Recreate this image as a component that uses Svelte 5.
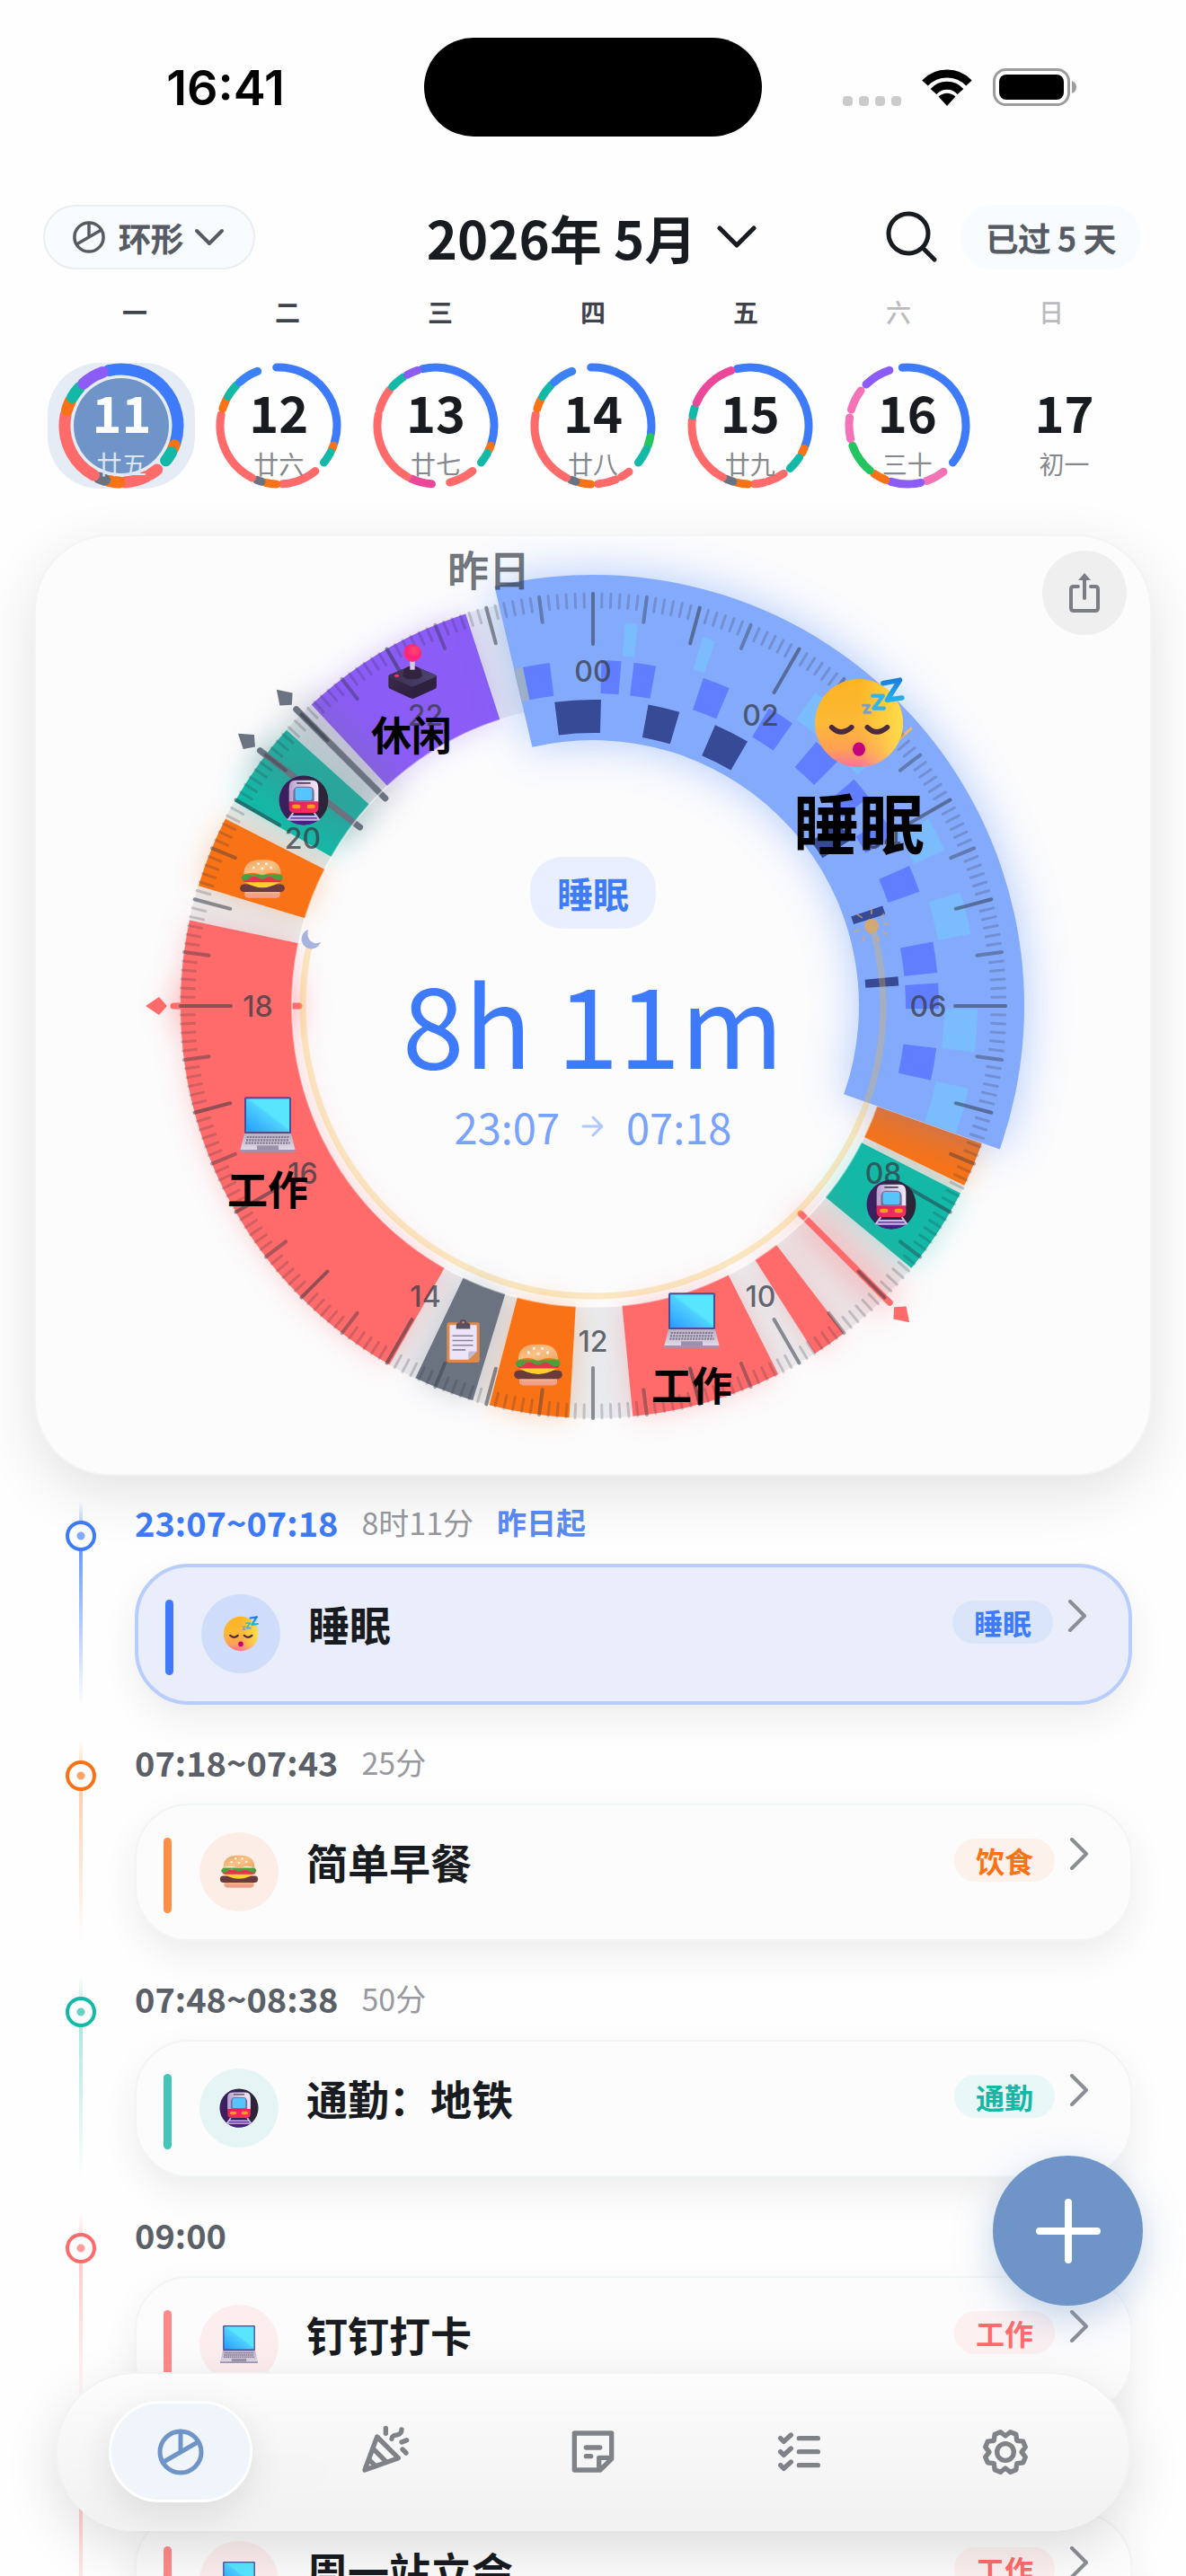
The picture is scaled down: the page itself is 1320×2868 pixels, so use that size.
<script lang="ts">
  type Arc = [number, number, string];

  const BLUE = '#3e7bfa';
  const SKY = '#3b82f6';
  const ORANGE = '#f97316';
  const TEAL = '#14b8a6';
  const RED = '#ff6b6b';
  const GRAY = '#6b7280';
  const PURPLE = '#8b5cf6';
  const PINK = '#ec4899';
  const ROSE = '#f472b6';
  const GREEN = '#22c55e';

  const weekdays = ['一', '二', '三', '四', '五', '六', '日'];

  // 每天的小圆环：起始角度、结束角度、颜色
  const days: { num: number; lunar: string; arcs: Arc[] }[] = [
    {
      num: 11,
      lunar: '廿五',
      arcs: [
        [-13, 108, BLUE], [110, 115, ORANGE], [118, 128, TEAL], [141, 149, RED], [154, 176, RED],
        [182, 193, ORANGE], [197, 203, GRAY], [209, 281, RED], [286, 296, ORANGE], [300, 312, TEAL], [318, 341, PURPLE]
      ]
    },
    {
      num: 12,
      lunar: '廿六',
      arcs: [
        [-2, 107, BLUE], [110, 114, ORANGE], [117, 129, TEAL], [141, 161, RED], [164, 176, RED],
        [182, 193, ORANGE], [197, 202, GRAY], [207, 281, RED], [287, 297, ORANGE], [300, 314, TEAL], [318, 339, SKY]
      ]
    },
    {
      num: 13,
      lunar: '廿七',
      arcs: [
        [-13, 108, BLUE], [110, 115, ORANGE], [118, 129, TEAL], [141, 166, RED], [184, 205, PINK],
        [209, 281, RED], [286, 308, RED], [312, 326, TEAL], [331, 342, PURPLE]
      ]
    },
    {
      num: 14,
      lunar: '廿八',
      arcs: [
        [-2, 98, BLUE], [101, 110, GREEN], [114, 129, TEAL], [142, 151, RED], [157, 175, RED],
        [182, 193, ORANGE], [197, 202, GRAY], [207, 281, RED], [287, 297, ORANGE], [300, 314, TEAL], [318, 339, SKY]
      ]
    },
    {
      num: 15,
      lunar: '廿九',
      arcs: [
        [-13, 110, BLUE], [113, 118, ORANGE], [123, 137, TEAL], [145, 162, RED], [166, 176, RED],
        [182, 193, ORANGE], [197, 204, GRAY], [208, 276, RED], [280, 288, TEAL], [293, 341, PINK]
      ]
    },
    {
      num: 16,
      lunar: '三十',
      arcs: [
        [-5, 129, BLUE], [142, 161, ROSE], [167, 197, PURPLE], [202, 215, ORANGE], [220, 250, GREEN],
        [257, 278, ROSE], [286, 307, ROSE], [315, 342, PURPLE]
      ]
    },
    { num: 17, lunar: '初一', arcs: [] }
  ];

  // 表盘上的时间段，单位小时
  const segments: Arc[] = [
    [7.3, 7.72, ORANGE],
    [7.8, 8.63, TEAL],
    [9.5, 9.83, RED],
    [10.22, 11.63, RED],
    [12.22, 12.97, ORANGE],
    [13.13, 13.7, GRAY],
    [13.97, 18.8, RED],
    [19.13, 19.8, ORANGE],
    [19.98, 20.8, TEAL],
    [21.13, 22.8, PURPLE]
  ];

  const markers = [
    { hour: 9, color: RED },
    { hour: 18, color: RED },
    { hour: 20.5, color: GRAY },
    { hour: 21, color: GRAY }
  ];

  const DEEP = '#374a95';
  const CORE = '#607eff';
  const REM = '#7bbcff';

  // 睡眠阶段，角度
  const stages: Arc[] = [
    [-7.2, 1.5, DEEP], [10.4, 16.4, DEEP], [23.5, 30.3, DEEP], [53, 57.2, DEEP], [70.9, 72.6, DEEP], [84.5, 86.2, DEEP],
    [-13.2, -11.7, '#9bafc8'],
    [-11.7, -7.2, CORE], [1.4, 4.7, CORE], [6.8, 10.5, CORE], [18.6, 23.2, CORE], [30.6, 35.2, CORE], [40.2, 45, CORE],
    [49, 52.9, CORE], [57.2, 60.7, CORE], [66.1, 70.7, CORE], [79.3, 84.5, CORE], [86.2, 90.5, CORE], [97, 102.4, CORE],
    [4.8, 6.7, REM], [16.6, 18.5, REM], [35.3, 40.2, REM], [45, 48.8, REM], [60.8, 66.1, REM], [72.8, 79.2, REM],
    [90.5, 96.9, REM], [102.4, 109.3, REM]
  ];

  function stageRadius(color: string): [number, number] {
    if (color === DEEP) return [304, 341];
    if (color === REM) return [391, 428];
    return [348, 385];
  }

  const dialIcons = [
    { icon: 'sleep', x: 296, y: -315, size: 112 },
    { icon: 'joystick', x: -201, y: -373, size: 64 },
    { icon: 'train', x: -322, y: -229, size: 56 },
    { icon: 'train', x: 332, y: 221, size: 56 },
    { icon: 'burger', x: -368, y: -141, size: 52 },
    { icon: 'burger', x: -61, y: 400, size: 56 },
    { icon: 'laptop', x: -362, y: 132, size: 64 },
    { icon: 'laptop', x: 110, y: 350, size: 64 },
    { icon: 'clipboard', x: -145, y: 373, size: 50 }
  ];

  const dialTexts = [
    { text: '休闲', x: -202, y: -304 },
    { text: '工作', x: -362, y: 202 },
    { text: '工作', x: 110, y: 420 }
  ];

  const entries = [
    { time: '23:07~07:18', duration: '8时11分', note: '昨日起', title: '睡眠', tag: '睡眠', icon: 'sleep', color: BLUE, active: true },
    { time: '07:18~07:43', duration: '25分', title: '简单早餐', tag: '饮食', icon: 'burger', color: ORANGE },
    { time: '07:48~08:38', duration: '50分', title: '通勤：地铁', tag: '通勤', icon: 'train', color: TEAL },
    { time: '09:00', title: '钉钉打卡', tag: '工作', icon: 'laptop', color: RED },
    { time: '09:30~09:50', duration: '20分', title: '周一站立会', tag: '工作', icon: 'laptop', color: RED }
  ];

  function polar(r: number, deg: number): string {
    const a = (deg * Math.PI) / 180;
    return `${(r * Math.sin(a)).toFixed(2)} ${(-r * Math.cos(a)).toFixed(2)}`;
  }

  function arcPath(r: number, a0: number, a1: number): string {
    const large = a1 - a0 > 180 ? 1 : 0;
    return `M${polar(r, a0)}A${r} ${r} 0 ${large} 1 ${polar(r, a1)}`;
  }

  function sector(r0: number, r1: number, a0: number, a1: number): string {
    const large = a1 - a0 > 180 ? 1 : 0;
    return `M${polar(r1, a0)}A${r1} ${r1} 0 ${large} 1 ${polar(r1, a1)}L${polar(r0, a1)}A${r0} ${r0} 0 ${large} 0 ${polar(r0, a0)}Z`;
  }

  // 每 5 分钟一个刻度
  const ticks = Array.from({ length: 288 }, (_, i) => {
    if (i % 24 === 0) return { deg: i * 1.25, len: 56, kind: 'hour' };
    if (i % 12 === 0) return { deg: i * 1.25, len: 41, kind: 'hour' };
    if (i % 6 === 0) return { deg: i * 1.25, len: 28, kind: 'half' };
    return { deg: i * 1.25, len: 15, kind: 'minor' };
  });

  const hourLabels = Array.from({ length: 12 }, (_, i) => {
    const a = (i * 30 * Math.PI) / 180;
    return { text: String(i * 2).padStart(2, '0'), x: 373 * Math.sin(a), y: -373 * Math.cos(a) };
  });

  const gear =
    'M' +
    Array.from({ length: 8 }, (_, k) => [polar(54, 45 * k), polar(69, 45 * k + 14), polar(69, 45 * k + 31)].join('L')).join('L') +
    'Z';
</script>

{#snippet emoji(name)}
  <svg class="emoji" viewBox="0 0 48 48" aria-hidden="true"><use href="#e-{name}" /></svg>
{/snippet}

{#snippet pie()}
  <svg class="pie" viewBox="0 0 60 60" aria-hidden="true">
    <circle cx="30" cy="30" r="23" />
    <path d="M30 7v23M49 19L11 41" />
  </svg>
{/snippet}

<svg class="defs" aria-hidden="true">
  <defs>
    <linearGradient id="g-face" x1="0" y1="0" x2="0" y2="1">
      <stop offset="0" stop-color="#fbb421" />
      <stop offset="0.5" stop-color="#fdb937" />
      <stop offset="0.8" stop-color="#ff9f55" />
      <stop offset="1" stop-color="#f9739a" />
    </linearGradient>
    <linearGradient id="g-shine" x1="0" y1="0" x2="1" y2="0">
      <stop offset="0.5" stop-color="#ffe04a" stop-opacity="0" />
      <stop offset="1" stop-color="#ffe04a" stop-opacity="0.9" />
    </linearGradient>
    <linearGradient id="g-z" x1="0" y1="0" x2="0" y2="1">
      <stop offset="0" stop-color="#1d7fdc" />
      <stop offset="1" stop-color="#22b2ec" />
    </linearGradient>
    <linearGradient id="g-screen" x1="0" y1="1" x2="1" y2="0">
      <stop offset="0" stop-color="#249cff" />
      <stop offset="0.5" stop-color="#4fd0ff" />
      <stop offset="0.55" stop-color="#58e6ff" />
      <stop offset="1" stop-color="#58e6ff" />
    </linearGradient>
    <linearGradient id="g-base" x1="0" y1="0" x2="0" y2="1">
      <stop offset="0" stop-color="#b9afc6" />
      <stop offset="1" stop-color="#e0dae6" />
    </linearGradient>
    <linearGradient id="g-bun" x1="0" y1="0" x2="1" y2="1">
      <stop offset="0" stop-color="#e3a564" />
      <stop offset="0.5" stop-color="#fbc083" />
      <stop offset="1" stop-color="#e9a568" />
    </linearGradient>
    <linearGradient id="g-night" x1="0" y1="0" x2="1" y2="0">
      <stop offset="0" stop-color="#3d1f63" />
      <stop offset="1" stop-color="#2b2533" />
    </linearGradient>
    <linearGradient id="g-train" x1="0" y1="0" x2="1" y2="0">
      <stop offset="0" stop-color="#b79fcf" />
      <stop offset="0.5" stop-color="#d9cfe6" />
      <stop offset="1" stop-color="#efe8f7" />
    </linearGradient>
    <linearGradient id="g-trainred" x1="0" y1="0" x2="1" y2="1">
      <stop offset="0" stop-color="#d8215f" />
      <stop offset="1" stop-color="#ff2f62" />
    </linearGradient>
    <radialGradient id="g-ball" cx="0.6" cy="0.35" r="0.7">
      <stop offset="0" stop-color="#ff4a6c" />
      <stop offset="0.6" stop-color="#fb2478" />
      <stop offset="1" stop-color="#ff2f8e" />
    </radialGradient>
    <linearGradient id="g-left" x1="0" y1="0" x2="1" y2="1">
      <stop offset="0" stop-color="#3c2f47" />
      <stop offset="1" stop-color="#2a1840" />
    </linearGradient>
    <linearGradient id="g-top" x1="0" y1="0" x2="1" y2="0">
      <stop offset="0" stop-color="#3d2f4f" />
      <stop offset="1" stop-color="#4b4373" />
    </linearGradient>

    <symbol id="e-sleep" viewBox="0 0 48 48">
      <circle cx="24" cy="24" r="21" fill="url(#g-face)" />
      <circle cx="24" cy="24" r="21" fill="url(#g-shine)" />
      <path d="M11 26q4.500 4.500 9.500 0M28 26q4.500 4.500 9.500 0" fill="none" stroke="#4a2b3b" stroke-width="2.400" stroke-linecap="round" />
      <ellipse cx="24" cy="36.500" rx="3" ry="3.300" fill="#c4007f" />
      <path d="M26 15.500h3l-2.500 3.500h3" fill="none" stroke="#7c9cc9" stroke-width="1.300" stroke-linejoin="round" stroke-linecap="round" />
      <path d="M30.500 11h5l-4.500 6h5" fill="none" stroke="#36b3ec" stroke-width="1.800" stroke-linejoin="round" stroke-linecap="round" />
      <path d="M35.500 5l8-1.500-6 9.500 7-1" fill="none" stroke="url(#g-z)" stroke-width="2.400" stroke-linejoin="round" stroke-linecap="round" />
    </symbol>

    <symbol id="e-burger" viewBox="0 0 48 48">
      <path d="M6 34h36v5q0 4-4 4H10q-4 0-4-4z" fill="#f2b184" />
      <path d="M6 39h36q0 4-4 4H10q-4 0-4-4z" fill="#eea08c" />
      <rect x="1" y="29" width="46" height="8" rx="4" fill="#6a3b3d" />
      <path d="M4 26h40l-8 4q-12 5-24 0z" fill="#fbd02c" />
      <rect x="4" y="21" width="40" height="6" rx="3" fill="#e5334f" />
      <path d="M5 19h38q5 5-1 6-5 0-8-3-4-2-7 1-4 2-8-1-4-3-7 0-3 4-8 3-4-2 1-6z" fill="#4f9d3c" />
      <path d="M5 19Q5 5 20 4h8q15 1 15 15-8-3-14-1-5 3-10 0-6-2-14 1z" fill="url(#g-bun)" />
      <g fill="#fff3df">
        <circle cx="20" cy="8" r="1.400" /><circle cx="28" cy="8" r="1.400" /><circle cx="15" cy="12" r="1.400" />
        <circle cx="24" cy="13" r="1.400" /><circle cx="33" cy="12" r="1.400" />
      </g>
    </symbol>

    <symbol id="e-train" viewBox="0 0 48 48">
      <circle cx="24" cy="24" r="23.500" fill="url(#g-night)" />
      <path d="M13 38h22l4 4q-6 5.500-15 5.500T9 42z" fill="#4c1f86" />
      <path d="M14 36l-5 7M34 36l5 7M12 39.500h24M10.500 42.500h27" stroke="#cbb8e6" stroke-width="1.800" />
      <path d="M10 12q0-7 6-7h16q6 0 6 7v14H10z" fill="url(#g-train)" />
      <path d="M10 25h28v6q0 5-6 5H16q-6 0-6-5z" fill="url(#g-trainred)" />
      <path d="M14 17q0-6 5-6h10q5 0 5 6v8H14z" fill="#7a6f94" />
      <rect x="16" y="12" width="16" height="12" rx="2" fill="#56c4ff" />
      <path d="M18 7.500h12" stroke="#4a4458" stroke-width="1.500" stroke-linecap="round" />
      <rect x="13" y="28" width="8" height="4" rx="2" fill="#ff9a1f" />
      <rect x="27" y="28" width="8" height="4" rx="2" fill="#ff9a1f" />
    </symbol>

    <symbol id="e-laptop" viewBox="0 0 48 48">
      <rect x="4.500" y="1" width="39" height="31" rx="1.500" fill="#4f4d92" />
      <rect x="6" y="2.500" width="36" height="27.500" fill="url(#g-screen)" />
      <path d="M4.500 31.500h39l3.500 14H1z" fill="url(#g-base)" />
      <path d="M1 45h46v1q0 1-1 1H2q-1 0-1-1z" fill="#9e93b2" />
      <path d="M6.500 34.500h35M6 37h36M5.500 39.500h37" stroke="#80778f" stroke-width="1.600" stroke-dasharray="1.600 0.800" />
      <rect x="15" y="41.500" width="18" height="3.500" fill="#9a92a8" />
    </symbol>

    <symbol id="e-clipboard" viewBox="0 0 48 48">
      <rect x="7" y="4" width="35" height="43" rx="2.500" fill="#dd8a4e" />
      <path d="M10 7h29v28l-9 9H10z" fill="#ece4f8" />
      <path d="M39 35h-7q-2 0-2 2v7z" fill="#c2b5da" />
      <path d="M13 18.500h22M13 23.500h22M13 28.500h22M13 33.500h14" stroke="#8a8399" stroke-width="1.500" />
      <path d="M17 8q0-4 4-4 0-3 3.500-3T28 4q4 0 4 4v3H17z" fill="#5a5060" />
      <circle cx="24.500" cy="4" r="1.200" fill="#dd8a4e" />
    </symbol>

    <symbol id="e-joystick" viewBox="0 0 48 48">
      <path d="M4 28l20-9 20 9v9q0 1.500-1.500 2L26 46.500q-2 1-4 0L5.500 39Q4 38.500 4 37z" fill="url(#g-left)" />
      <path d="M24 37l20-9v9q0 1.500-1.500 2L26 46.500q-1 .5-2 .5z" fill="#2e2140" />
      <path d="M5 27l17-7q2-1 4 0l17 7q1.500 1 0 2l-17 7.500q-2 1-4 0L5 29q-1.500-1 0-2z" fill="url(#g-top)" />
      <path d="M16 28q0-8 8-8t8 8q-1 3-8 3t-8-3z" fill="#33233f" />
      <rect x="22" y="14" width="4" height="9" fill="#d9c8e8" />
      <circle cx="24" cy="9" r="7.500" fill="url(#g-ball)" />
      <ellipse cx="11" cy="28" rx="2" ry="1.200" fill="#ff2f6e" />
    </symbol>

    <filter id="blur-sm" x="-60%" y="-60%" width="220%" height="220%"><feGaussianBlur stdDeviation="16" /></filter>
    <filter id="blur-lg" x="-30%" y="-30%" width="160%" height="160%"><feGaussianBlur stdDeviation="26" /></filter>
    <filter id="blur-line" filterUnits="userSpaceOnUse" x="-620" y="-520" width="1240" height="1040">
      <feGaussianBlur stdDeviation="18" />
    </filter>
  </defs>
</svg>

<main class="app">
  <div class="status-bar">
    <span class="clock">16:41</span>
    <span class="island"></span>
    <span class="indicators">
      <span class="signal"><i></i><i></i><i></i><i></i></span>
      <svg class="wifi" viewBox="0 0 58 42" aria-hidden="true">
        <path d="M4.500 16.500a34 34 0 0 1 49 0" />
        <path d="M14 26a20 20 0 0 1 30 0" />
        <path class="solid" d="M29 42l-9.500-10.500q9.500-7.500 19 0z" />
      </svg>
      <svg class="battery" viewBox="0 0 94 42" aria-hidden="true">
        <rect x="1.500" y="1.500" width="83" height="39" rx="13" fill="none" stroke="#9c9c9c" stroke-width="3" />
        <rect x="7" y="7" width="72" height="28" rx="8" />
        <path d="M88 14q5 2 5 7t-5 7z" fill="#9c9c9c" />
      </svg>
    </span>
  </div>

  <header class="topbar">
    <button class="pill mode">
      {@render pie()}
      环形
      <svg class="chevron" viewBox="0 0 34 20" aria-hidden="true"><path d="M3 3l14 14L31 3" /></svg>
    </button>
    <button class="month">
      2026年 5月
      <svg class="chevron big" viewBox="0 0 46 28" aria-hidden="true"><path d="M4 4l19 19L42 4" /></svg>
    </button>
    <div class="topbar-right">
      <button class="search" aria-label="搜索">
        <svg viewBox="0 0 60 60" aria-hidden="true"><circle cx="26" cy="26" r="22" /><path d="M42 42l13 13" /></svg>
      </button>
      <button class="pill passed">已过 5 天</button>
    </div>
  </header>

  <div class="weekdays">
    {#each weekdays as day, i}
      <span class:weekend={i > 4}>{day}</span>
    {/each}
  </div>

  <div class="days">
    {#each days as day, i}
      <button class="day" class:selected={i === 0}>
        <svg class="ring" viewBox="-70 -70 140 140" aria-hidden="true">
          {#if i === 0}<circle r="53" fill="#6f95c8" />{/if}
          {#each day.arcs as [a0, a1, color]}
            <path d={arcPath(i === 0 ? 63 : 65, a0, a1)} stroke={color} />
          {/each}
        </svg>
        <span class="num">{day.num}</span>
        <span class="lunar">{day.lunar}</span>
      </button>
    {/each}
  </div>

  <section class="dial-card">
    <svg class="dial" viewBox="-620 -523 1240 1044" role="img" aria-label="时间环">
      <path d={sector(335, 459, 0, 359.9)} fill="#7b8494" fill-opacity="0.14" />

      {#each segments as [h0, h1, color]}
        <path d={sector(335, 459, h0 * 15, h1 * 15)} fill={color} opacity="0.3" filter="url(#blur-sm)" />
      {/each}
      {#each segments as [h0, h1, color]}
        <path d={sector(335, 459, h0 * 15, h1 * 15)} fill={color} />
      {/each}

      {#each markers as m}
        <g transform="rotate({m.hour * 15})">
          <path d="M0-468V-326" stroke={m.color} stroke-width="40" opacity="0.36" filter="url(#blur-line)" />
          <path d="M0-467V-327" stroke={m.color} stroke-width="7" stroke-linecap="round" />
          <path d="M0-498L10-483 0-474-10-483z" fill={m.color} />
        </g>
      {/each}

      <circle r="335" fill="none" stroke="#ffffff" stroke-opacity="0.5" stroke-width="2" />

      <path d={sector(296, 480, -13.2, 109.4)} fill={BLUE} opacity="0.4" filter="url(#blur-lg)" />
      <path d={sector(296, 480, -13.2, 109.4)} fill="#84aafc" />
      {#each stages as [a0, a1, color]}
        <path d={sector(...stageRadius(color), a0, a1)} fill={color} />
      {/each}
      <path d="M0-471V-434" transform="rotate(48.900)" stroke="#eeb85c" stroke-width="3" />

      <path d={arcPath(323, 75, 283)} fill="none" stroke="#f5be3c" stroke-opacity="0.3" stroke-width="7" />
      <g transform="translate(310 -89)" stroke="#dba964" stroke-width="2" opacity="0.9">
        <circle r="7" fill="#dba964" />
        <path d="M0-13v-7M10-9l4-5M13-2l7-1M12 6l6 4M-10-9l-6-4M-13 4l-7 2M-7 11l-4 7M6 11l3 6" stroke-opacity="0.7" />
      </g>
      <path d="M-317-85a11 11 0 1 0 14 14q-8 3-12-2t-2-12z" fill="#a9b3e0" />

      {#each ticks as t}
        <path class="tick {t.kind}" d="M0-459V{-459 + t.len}" transform="rotate({t.deg})" />
      {/each}
      {#each hourLabels as l}
        <text class="hour-label" x={l.x} y={l.y}>{l.text}</text>
      {/each}

      <text class="yesterday" x="-116" y="-488">昨日</text>
      {#each dialIcons as d}
        <use href="#e-{d.icon}" x={d.x - d.size / 2} y={d.y - d.size / 2} width={d.size} height={d.size} />
      {/each}
      <text class="dial-text large" x="296" y="-207">睡眠</text>
      {#each dialTexts as t}
        <text class="dial-text" x={t.x} y={t.y}>{t.text}</text>
      {/each}
    </svg>

    <div class="dial-center">
      <span class="badge">睡眠</span>
      <strong class="total">8h 11m</strong>
      <span class="range">
        23:07
        <svg viewBox="0 0 26 26" aria-hidden="true"><path d="M2 13h21M13 3l10 10-10 10" /></svg>
        07:18
      </span>
    </div>

    <button class="share" aria-label="分享">
      <svg viewBox="0 0 36 48" aria-hidden="true">
        <path d="M11 17H6q-3 0-3 3v21q0 3 3 3h24q3 0 3-3V20q0-3-3-3h-5M18 30V7" />
        <path class="head" d="M18 2l7 8H11z" />
      </svg>
    </button>
  </section>

  <section class="timeline">
    {#each entries as entry}
      <article class="entry" class:active={entry.active} style="--c: {entry.color}">
        <div class="rail"><span class="dot"></span></div>
        <div class="entry-body">
          <div class="entry-head">
            <span class="time">{entry.time}</span>
            {#if entry.duration}<span class="duration">{entry.duration}</span>{/if}
            {#if entry.note}<span class="note">{entry.note}</span>{/if}
          </div>
          <a class="entry-card" href="#detail">
            <span class="bar"></span>
            <span class="avatar">{@render emoji(entry.icon)}</span>
            <span class="title">{entry.title}</span>
            <span class="tag">{entry.tag}</span>
            <svg class="arrow" viewBox="0 0 22 36" aria-hidden="true"><path d="M3 2l16 16L3 34" /></svg>
          </a>
        </div>
      </article>
    {/each}
  </section>

  <button class="fab" aria-label="添加">
    <svg viewBox="0 0 72 72" aria-hidden="true"><path d="M36 4v64M4 36h64" /></svg>
  </button>

  <nav class="tabbar">
    <a class="tab current" href="#ring" aria-label="环形">{@render pie()}</a>
    <a class="tab" href="#events" aria-label="活动">
      <svg viewBox="72 93 180 180" aria-hidden="true">
        <path d="M131 132L202 203 90 243z" />
        <path d="M117 171l44 44M104 208l22 22" />
        <path d="M160 103v18M180 139c3-15 11-11 20-14s13-6 13-17M213 150l17-7M216 174l12 12" />
      </svg>
    </a>
    <a class="tab" href="#notes" aria-label="笔记">
      <svg viewBox="750 93 180 180" aria-hidden="true">
        <path d="M778 120h124v86l-38 37h-86zM860 243v-41h42M817 168h46M817 197h16" />
      </svg>
    </a>
    <a class="tab" href="#todo" aria-label="待办">
      <svg viewBox="60 93 180 180" aria-hidden="true">
        <path d="M86 137l11 11 24-22M86 182l11 11 24-22M86 227l11 11 24-22M148 137h63M148 182h63M148 227h63" />
      </svg>
    </a>
    <a class="tab" href="#settings" aria-label="设置">
      <svg viewBox="-90 -90 180 180" aria-hidden="true"><path d={gear} /><circle r="28" /></svg>
    </a>
  </nav>
</main>

<style>
  :global(body) {
    background: #fefefe;
  }

  .defs {
    position: absolute;
    width: 0;
    height: 0;
  }

  .app {
    position: relative;
    display: flex;
    flex-direction: column;
    height: 100vh;
    overflow: hidden;
    background: #fefefe;
    color: #181b20;
    font-family: 'Noto Sans CJK SC', 'Noto Sans', sans-serif;
  }

  button {
    padding: 0;
    border: none;
    background: none;
    color: inherit;
    font: inherit;
    cursor: pointer;
  }

  a {
    color: inherit;
    text-decoration: none;
  }

  svg {
    display: block;
    flex: none;
  }

  .status-bar {
    display: grid;
    grid-template-columns: 1fr auto 1fr;
    align-items: center;
    height: 110px;
    margin-top: 42px;
  }

  .clock {
    justify-self: center;
    padding-left: 30px;
    font-family: Inter, 'Liberation Sans', sans-serif;
    font-size: 54px;
    font-weight: 600;
    color: #000;
  }

  .island {
    width: 376px;
    height: 110px;
    border-radius: 55px;
    background: #000;
  }

  .indicators {
    display: flex;
    align-items: center;
    justify-content: flex-end;
    gap: 22px;
    padding-right: 121px;
  }

  .signal {
    display: flex;
    align-self: flex-end;
    gap: 7px;
  }

  .signal i {
    width: 11px;
    height: 11px;
    border-radius: 4px;
    background: #cbcbcb;
  }

  .wifi {
    width: 58px;
    height: 42px;
  }

  .wifi path {
    fill: none;
    stroke: #000;
    stroke-width: 9;
  }

  .wifi .solid {
    fill: #000;
    stroke: none;
  }

  .battery {
    width: 94px;
    height: 42px;
  }

  .topbar {
    display: grid;
    grid-template-columns: 1fr auto 1fr;
    align-items: center;
    height: 72px;
    margin-top: 76px;
    padding: 0 50px 0 48px;
  }

  .pill {
    display: flex;
    align-items: center;
    height: 72px;
    box-sizing: border-box;
    border-radius: 36px;
    background: #f9fcfe;
    color: #565b63;
    font-size: 36px;
    font-weight: 500;
    -webkit-text-stroke: 1px currentColor;
  }

  .mode {
    justify-self: start;
    gap: 12px;
    padding: 0 32px 0 28px;
    border: 2px solid #ebedf1;
  }

  .pie {
    width: 42px;
    height: 42px;
    fill: none;
    stroke: currentColor;
    stroke-width: 5;
  }

  .chevron {
    width: 34px;
    height: 20px;
    fill: none;
    stroke: currentColor;
    stroke-width: 4;
    stroke-linecap: round;
    stroke-linejoin: round;
  }

  .month {
    display: flex;
    align-items: center;
    gap: 22px;
    font-size: 58px;
    font-weight: 700;
    line-height: 72px;
  }

  .chevron.big {
    width: 46px;
    height: 28px;
    stroke-width: 5;
  }

  .topbar-right {
    display: flex;
    align-items: center;
    justify-content: flex-end;
    gap: 24px;
  }

  .search svg {
    width: 60px;
    height: 60px;
    fill: none;
    stroke: currentColor;
    stroke-width: 5;
    stroke-linecap: round;
  }

  .passed {
    padding: 0 28px;
  }

  .weekdays {
    display: grid;
    grid-template-columns: repeat(7, 1fr);
    margin-top: 28px;
    padding: 0 65px;
    color: #3f444c;
    font-size: 28px;
    font-weight: 700;
    line-height: 38px;
    text-align: center;
  }

  .weekend {
    color: #b9bbbf;
    font-weight: 500;
  }

  .days {
    display: grid;
    grid-template-columns: repeat(7, 1fr);
    justify-items: center;
    margin-top: 38px;
    padding: 0 48px;
  }

  .day {
    position: relative;
    display: flex;
    flex-direction: column;
    align-items: center;
    width: 164px;
    height: 140px;
    border-radius: 58px;
  }

  .day.selected {
    background: #e5ecf6;
  }

  .ring {
    position: absolute;
    inset: 0 12px;
    width: 140px;
    height: 140px;
    fill: none;
    stroke-width: 9;
    stroke-linecap: round;
  }

  .selected .ring {
    stroke-width: 13;
  }

  .num {
    position: relative;
    margin-top: 22px;
    font-size: 56px;
    font-weight: 700;
    line-height: 64px;
  }

  .lunar {
    position: relative;
    color: #85888d;
    font-size: 28px;
    line-height: 52px;
  }

  .selected .num {
    color: #fff;
  }

  .selected .lunar {
    color: #dce6f4;
  }

  .dial-card {
    position: relative;
    z-index: 1;
    flex: none;
    margin: 51px 38px 0;
    border: 2px solid #f3f4f5;
    border-radius: 84px;
    background: #fcfcfd;
    box-shadow: 0 20px 64px rgba(0, 0, 0, 0.11);
  }

  .dial {
    width: 100%;
    height: auto;
  }

  .tick {
    stroke: #2d3340;
    stroke-linecap: round;
  }

  .tick.minor {
    stroke-width: 3;
    stroke-opacity: 0.22;
  }

  .tick.half {
    stroke-width: 4;
    stroke-opacity: 0.4;
  }

  .tick.hour {
    stroke-width: 4;
    stroke-opacity: 0.52;
  }

  .hour-label,
  .dial-text,
  .yesterday {
    text-anchor: middle;
    dominant-baseline: central;
  }

  .hour-label {
    fill: #363c46;
    fill-opacity: 0.75;
    font-family: Inter, 'Liberation Sans', sans-serif;
    font-size: 32px;
    font-weight: 500;
  }

  .dial-text {
    fill: #000;
    font-size: 45px;
    font-weight: 700;
  }

  .dial-text.large {
    font-size: 73px;
  }

  .yesterday {
    fill: #363c46;
    fill-opacity: 0.7;
    stroke: #363c46;
    stroke-opacity: 0.4;
    font-size: 46px;
    font-weight: 500;
  }

  .dial-center {
    position: absolute;
    inset: 0;
    display: flex;
    flex-direction: column;
    align-items: center;
    justify-content: center;
    color: #3e7bfa;
    pointer-events: none;
  }

  .badge {
    padding: 0 30px;
    border-radius: 36px;
    background: #e9effe;
    font-size: 40px;
    font-weight: 700;
    line-height: 80px;
  }

  .total {
    margin-top: 22px;
    font-size: 124px;
    font-weight: 400;
    line-height: 160px;
  }

  .range {
    display: flex;
    align-items: center;
    gap: 24px;
    margin-top: 8px;
    color: #78a2fb;
    font-size: 47px;
    line-height: 60px;
  }

  .range svg {
    width: 26px;
    height: 26px;
    fill: none;
    stroke: #b0c8fd;
    stroke-width: 3;
    stroke-linecap: round;
    stroke-linejoin: round;
  }

  .share {
    position: absolute;
    top: 16px;
    right: 26px;
    display: grid;
    place-items: center;
    width: 94px;
    height: 94px;
    border-radius: 50%;
    background: #efeff0;
  }

  .share svg {
    width: 36px;
    height: 48px;
    fill: none;
    stroke: #7a7e84;
    stroke-width: 4;
    stroke-linecap: round;
  }

  .share .head {
    fill: #7a7e84;
    stroke: none;
  }

  .timeline {
    display: flex;
    flex-direction: column;
    gap: 40px;
    margin-top: 28px;
    padding: 0 60px 0 72px;
  }

  .entry {
    display: flex;
    gap: 42px;
  }

  .rail {
    display: flex;
    justify-content: center;
    width: 36px;
    padding-top: 22px;
    background: linear-gradient(to bottom, transparent, color-mix(in srgb, var(--c) 75%, transparent) 24%, transparent)
      center / 4px 100% no-repeat;
  }

  .entry:not(.active) .rail {
    background: linear-gradient(to bottom, transparent, color-mix(in srgb, var(--c) 36%, transparent) 20%, transparent)
      center / 4px 100% no-repeat;
  }

  .dot {
    width: 26px;
    height: 26px;
    border: 4px solid var(--c);
    border-radius: 50%;
    background: radial-gradient(circle, color-mix(in srgb, var(--c) 65%, #fff) 4px, #fcfdfe 5px);
  }

  .entry-body {
    flex: 1;
  }

  .entry-head {
    display: flex;
    align-items: center;
    height: 46px;
    margin-bottom: 24px;
    gap: 26px;
    color: #5b5f67;
  }

  .time {
    font-size: 38px;
    font-weight: 700;
  }

  .active .time {
    color: #3e7bfa;
  }

  .duration {
    color: #97999e;
    font-size: 34px;
  }

  .note {
    color: #5a8bf7;
    font-size: 33px;
    font-weight: 700;
  }

  .entry-card {
    display: flex;
    align-items: flex-start;
    box-sizing: border-box;
    height: 153px;
    padding: 30px 46px 0 30px;
    border: 2px solid #f2f5f6;
    border-radius: 60px;
    background: #fcfcfd;
    box-shadow: 0 16px 40px rgba(0, 0, 0, 0.07);
  }

  .active .entry-card {
    height: 157px;
    border: 4px solid #b9cdfc;
    background: #eaeefa;
  }

  .bar {
    width: 9px;
    height: 84px;
    margin-top: 6px;
    border-radius: 5px;
    background: color-mix(in srgb, var(--c) 80%, #fff);
  }

  .active .bar {
    background: var(--c);
  }

  .avatar {
    display: grid;
    place-items: center;
    width: 88px;
    height: 88px;
    margin-left: 31px;
    border-radius: 50%;
    background: color-mix(in srgb, var(--c) 10%, #fcfcfd);
  }

  .active .avatar {
    background: #cfddfa;
  }

  .emoji {
    width: 44px;
    height: 44px;
  }

  .title {
    flex: 1;
    margin-left: 31px;
    font-size: 46px;
    font-weight: 700;
    line-height: 64px;
  }

  .tag {
    margin-top: 7px;
    padding: 0 24px;
    border-radius: 24px;
    background: color-mix(in srgb, var(--c) 8%, #fcfcfd);
    color: var(--c);
    font-size: 32px;
    font-weight: 700;
    line-height: 48px;
  }

  .active .tag {
    background: #dbe5fa;
  }

  .arrow {
    width: 22px;
    height: 36px;
    margin: 6px 0 0 16px;
    fill: none;
    stroke: #8b8e94;
    stroke-width: 4;
    stroke-linecap: round;
    stroke-linejoin: round;
  }

  .fab {
    position: absolute;
    z-index: 2;
    right: 48px;
    bottom: 301px;
    display: grid;
    place-items: center;
    width: 167px;
    height: 167px;
    border-radius: 50%;
    background: #6f95c8;
    box-shadow: 0 14px 44px rgba(111, 149, 200, 0.4);
  }

  .fab svg {
    width: 72px;
    height: 72px;
    fill: none;
    stroke: #fff;
    stroke-width: 8;
    stroke-linecap: round;
  }

  .tabbar {
    position: absolute;
    z-index: 2;
    right: 62px;
    bottom: 50px;
    left: 62px;
    display: grid;
    grid-template-columns: repeat(5, 1fr);
    place-items: center;
    height: 177px;
    padding: 0 22px;
    box-sizing: border-box;
    border: 2px solid #f1f2f2;
    border-radius: 88px;
    background: linear-gradient(rgba(252, 252, 252, 0.96), rgba(241, 241, 241, 0.97));
    box-shadow: 0 20px 60px rgba(0, 0, 0, 0.13);
    backdrop-filter: blur(24px);
  }

  .tab {
    display: grid;
    place-items: center;
    width: 160px;
    height: 113px;
    color: #7f8287;
  }

  .tab svg {
    width: 60px;
    height: 60px;
    fill: none;
    stroke: currentColor;
    stroke-width: 16;
    stroke-linecap: round;
    stroke-linejoin: round;
  }

  .tab.current {
    box-sizing: border-box;
    border: 3px solid #fff;
    border-radius: 57px;
    background: #f0f5fb;
    box-shadow: 0 12px 40px rgba(0, 0, 0, 0.1);
    color: #6f95c8;
  }

  .tab.current svg {
    stroke-width: 5;
  }
</style>
